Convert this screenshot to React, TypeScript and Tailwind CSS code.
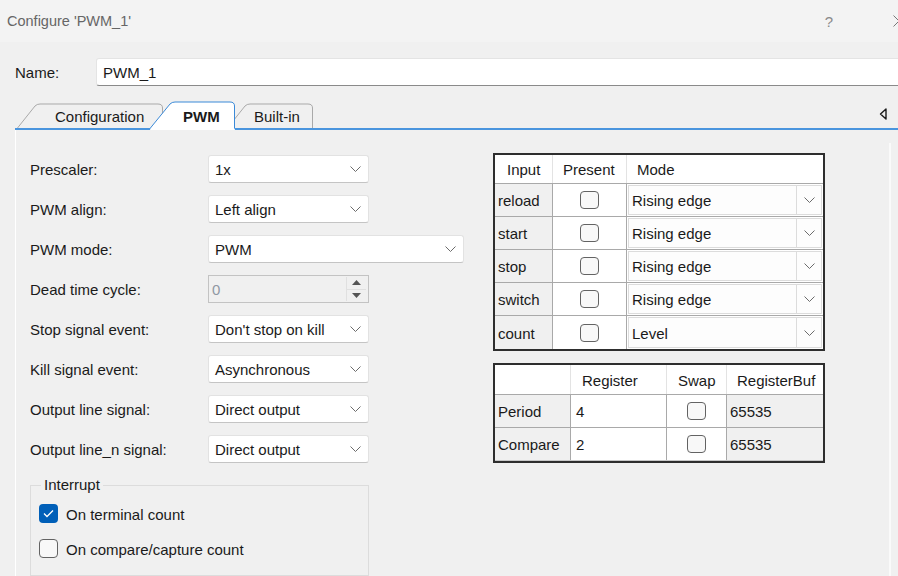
import React from "react";

const Chevron = () => (
  <svg width="11" height="6" viewBox="0 0 11 6" className="shrink-0">
    <path d="M0.5 0.5 L5.5 5.5 L10.5 0.5" fill="none" stroke="#6b6b6b" strokeWidth="1" />
  </svg>
);

type SelectProps = { value: string; width: string };

const Select: React.FC<SelectProps> = ({ value, width }) => (
  <div
    className={`${width} h-[28px] flex items-center justify-between pl-[6px] pr-[7px] bg-white border border-[#e2e2e2] border-b-[#c4c4c4] rounded-[3px]`}
  >
    <span className="pt-[3px]">{value}</span>
    <Chevron />
  </div>
);

const CheckBox = ({ checked = false, size = "w-[19px] h-[19px]" }: { checked?: boolean; size?: string }) =>
  checked ? (
    <div className={`${size} shrink-0 rounded-[4px] bg-[#005fb8] flex items-center justify-center`}>
      <svg width="11" height="9" viewBox="0 0 11 9">
        <path d="M1 4.5 L4 7.5 L10 1.5" fill="none" stroke="white" strokeWidth="1.3" />
      </svg>
    </div>
  ) : (
    <div className={`${size} shrink-0 rounded-[4px] bg-[#f8f8f8] border border-[#636363]`} />
  );

const rows: { label: string; value: string; width?: string; spin?: boolean }[] = [
  { label: "Prescaler:", value: "1x" },
  { label: "PWM align:", value: "Left align" },
  { label: "PWM mode:", value: "PWM", width: "w-[256px]" },
  { label: "Dead time cycle:", value: "0", spin: true },
  { label: "Stop signal event:", value: "Don't stop on kill" },
  { label: "Kill signal event:", value: "Asynchronous" },
  { label: "Output line signal:", value: "Direct output" },
  { label: "Output line_n signal:", value: "Direct output" },
];

const inputs: { name: string; mode: string }[] = [
  { name: "reload", mode: "Rising edge" },
  { name: "start", mode: "Rising edge" },
  { name: "stop", mode: "Rising edge" },
  { name: "switch", mode: "Rising edge" },
  { name: "count", mode: "Level" },
];

const registers = [
  { name: "Period", value: "4", buf: "65535" },
  { name: "Compare", value: "2", buf: "65535" },
];

const SpinBox = () => (
  <div className="w-[161px] h-[28px] flex items-center justify-between pl-[3px] pr-[2px] bg-[#f0f0f0] border border-[#c3c3c3]">
    <span className="pt-[3px] text-[#8f98a3]">0</span>
    <div className="w-[20px] h-[24px] flex flex-col border-l border-[#e0e0e0]">
      <div className="flex-1 flex items-center justify-center border-b border-[#e0e0e0]">
        <svg width="9" height="5" viewBox="0 0 9 5">
          <path d="M0 5 L4.5 0 L9 5 Z" fill="#555" />
        </svg>
      </div>
      <div className="flex-1 flex items-center justify-center">
        <svg width="9" height="5" viewBox="0 0 9 5">
          <path d="M0 0 L4.5 5 L9 0 Z" fill="#555" />
        </svg>
      </div>
    </div>
  </div>
);

const App: React.FC = () => {
  return (
    <div className="w-[898px] h-[576px] overflow-hidden bg-[#f0f0f0] flex flex-col text-[15px] text-[#1a1a1a] font-['Liberation_Sans',Arial,sans-serif]">
      {/* title bar */}
      <div className="h-[42px] shrink-0 flex items-center bg-[#f3f3f3] pl-[7px]">
        <span className="flex-1 pt-[2px] text-[14.5px] text-[#666]">Configure 'PWM_1'</span>
        <span className="pt-[2px] text-[15px] text-[#8a8a8a] mr-[60px]">?</span>
        <svg width="12" height="12" viewBox="0 0 12 12" className="shrink-0 -mr-[7px]">
          <path d="M0.5 0.5 L11.5 11.5 M11.5 0.5 L0.5 11.5" stroke="#777" strokeWidth="1" />
        </svg>
      </div>

      {/* name */}
      <div className="mt-[16px] h-[28px] flex items-center shrink-0">
        <span className="w-[96px] pl-[15px] pt-[2px]">Name:</span>
        <div className="flex-1 h-full flex items-center pl-[6px] pt-[3px] bg-white border border-[#e4e4e4] border-b-[#8a8a8a] rounded-l-[3px] -mr-[4px]">
          PWM_1
        </div>
      </div>

      {/* tabs */}
      <div className="mt-[15px] h-[27px] flex items-stretch shrink-0 relative">
        <div className="relative ml-[17px] w-[146px] pl-[38px] pt-[7px] leading-[18px]">
          <svg className="absolute inset-0" width="146" height="27" viewBox="0 0 146 27">
            <path d="M0.5 27 L18 5 Q20 3 23 3 L141 3 Q145.5 3 145.5 7 L145.5 27" fill="#f0f0f0" stroke="#a9a9a9" />
          </svg>
          <span className="relative">Configuration</span>
        </div>
        <div className="relative z-10 -ml-[13px] w-[85px] pl-[33px] pt-[7px] leading-[18px] font-bold">
          <svg className="absolute left-0 top-0" width="85" height="29" viewBox="0 0 85 29">
            <path d="M0 29 L0.5 27 L20 3 Q22 1 25 1 L80 1 Q84.5 1 84.5 5 L84.5 27 L85 29 Z" fill="#ffffff" stroke="none" />
            <path d="M0 27.5 L20 3 Q22 1 25 1 L80 1 Q84.5 1 84.5 5 L84.5 27.5" fill="none" stroke="#3b8ad8" />
          </svg>
          <span className="relative">PWM</span>
        </div>
        <div className="relative -ml-[8px] w-[86px] pl-[27px] pt-[7px] leading-[18px]">
          <svg className="absolute inset-0" width="86" height="27" viewBox="0 0 86 27">
            <path d="M0.5 27 L18 5 Q20 3 23 3 L81 3 Q85.5 3 85.5 7 L85.5 27" fill="#f0f0f0" stroke="#a9a9a9" />
          </svg>
          <span className="relative">Built-in</span>
        </div>
        <div className="flex-1 flex items-center justify-end pr-[11px] pb-[1px]">
          <svg width="8" height="12" viewBox="0 0 8 12">
            <path d="M7 1 L1.5 6 L7 11 Z" fill="none" stroke="#1a1a1a" strokeWidth="1.4" strokeLinejoin="round" />
          </svg>
        </div>
      </div>
      <div className="h-[2px] ml-[15px] shrink-0 bg-[#4a95de]" />

      {/* content */}
      <div className="flex-1 flex ml-[15px] border-l border-white min-h-0">
        <div className="flex-1 flex pl-[14px] pt-[23px]">
          <div className="w-[463px] pt-[2px] flex flex-col">
            <div className="flex flex-col gap-[12px]">
              {rows.map((r) => (
                <div key={r.label} className="flex items-center h-[28px]">
                  <span className="w-[178px] pt-[3px]">{r.label}</span>
                  {r.spin ? <SpinBox /> : <Select value={r.value} width={r.width ?? "w-[161px]"} />}
                </div>
              ))}
            </div>
            <fieldset className="mt-[13px] w-[339px] h-[100px] border border-[#dcdcdc] pl-[8px]">
              <legend className="ml-[2px] px-[3px] leading-[18px]">Interrupt</legend>
              <div className="flex items-center gap-[8px] mt-[10px] h-[19px]">
                <CheckBox checked />
                <span className="pt-[3px]">On terminal count</span>
              </div>
              <div className="flex items-center gap-[8px] mt-[16px] h-[19px]">
                <CheckBox />
                <span className="pt-[3px]">On compare/capture count</span>
              </div>
            </fieldset>
          </div>

          <div className="flex flex-col gap-[12px]">
            {/* inputs table */}
            <div className="w-[332px] border-2 border-[#2e2e2e] bg-white">
              <div className="flex h-[29px] border-b border-[#a9a9a9]">
                <div className="w-[58px] flex items-center pl-[12px] pt-[3px] border-r border-[#e3e3e3]">Input</div>
                <div className="w-[74px] flex items-center pl-[10px] pt-[3px] border-r border-[#e3e3e3]">Present</div>
                <div className="flex-1 flex items-center pl-[10px] pt-[3px]">Mode</div>
              </div>
              {inputs.map((r, i) => (
                <div
                  key={r.name}
                  className={`flex h-[33px] ${i < inputs.length - 1 ? "border-b border-[#a9a9a9]" : ""}`}
                >
                  <div className="w-[58px] flex items-center pl-[3px] pt-[3px] bg-[#f0f0f0] border-r border-[#a9a9a9]">
                    {r.name}
                  </div>
                  <div className="w-[74px] flex items-center justify-center border-r border-[#a9a9a9]">
                    <CheckBox size="w-[19px] h-[18px]" />
                  </div>
                  <div className="flex-1 flex p-[1px]">
                    <div className="flex-1 flex bg-[#fdfdfd] border border-[#dcdcdc]">
                      <div className="flex-1 flex items-center pl-[3px] pt-[3px] border-r border-[#dcdcdc]">{r.mode}</div>
                      <div className="w-[24px] flex items-center justify-center">
                        <Chevron />
                      </div>
                    </div>
                  </div>
                </div>
              ))}
            </div>

            {/* registers table */}
            <div className="w-[332px] border-2 border-[#2e2e2e] bg-white">
              <div className="flex h-[30px] border-b border-[#a9a9a9]">
                <div className="w-[76px] border-r border-[#e3e3e3]" />
                <div className="w-[96px] flex items-center pl-[11px] pt-[3px] border-r border-[#e3e3e3]">Register</div>
                <div className="w-[60px] flex items-center pl-[11px] pt-[3px] border-r border-[#e3e3e3]">Swap</div>
                <div className="flex-1 flex items-center pl-[10px] pt-[3px]">RegisterBuf</div>
              </div>
              {registers.map((r, i) => (
                <div
                  key={r.name}
                  className={`flex h-[33px] ${i < registers.length - 1 ? "border-b border-[#a9a9a9]" : "border-b border-[#c8c8c8]"}`}
                >
                  <div className="w-[76px] flex items-center pl-[3px] pt-[3px] bg-[#f0f0f0] border-r border-[#a9a9a9]">
                    {r.name}
                  </div>
                  <div className="w-[96px] flex items-center pl-[5px] pt-[3px] border-r border-[#a9a9a9]">{r.value}</div>
                  <div className="w-[60px] flex items-center justify-center border-r border-[#a9a9a9]">
                    <CheckBox size="w-[19px] h-[18px]" />
                  </div>
                  <div className="flex-1 flex items-center pl-[3px] pt-[3px] bg-[#f0f0f0]">{r.buf}</div>
                </div>
              ))}
            </div>
          </div>
        </div>
        <div className="w-[2px] mt-[13px] mr-[7px] bg-[#fafafa]" />
      </div>
    </div>
  );
};

export default App;
